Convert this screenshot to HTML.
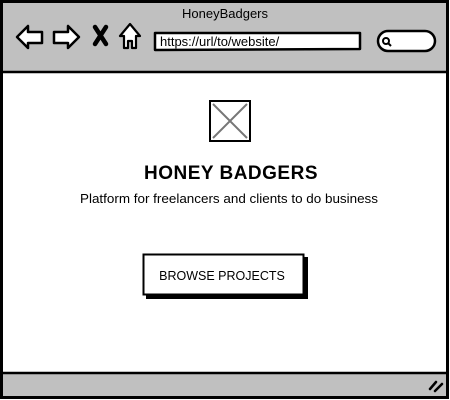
<!DOCTYPE html>
<html><head><style>
html,body{margin:0;padding:0;background:#fff;width:450px;height:400px;overflow:hidden}
svg{display:block}
text{font-family:"Liberation Sans",sans-serif}
</style></head><body>
<svg width="450" height="400" viewBox="0 0 450 400">
<rect x="1.5" y="1.5" width="446" height="396" fill="#fff" stroke="#000" stroke-width="3"/>
<rect x="3" y="3" width="443" height="69" fill="#c0c0c0"/>
<line x1="2" y1="72" x2="447" y2="72" stroke="#000" stroke-width="2.5"/>
<rect x="3" y="373" width="443" height="23" fill="#c0c0c0"/>
<line x1="2" y1="373" x2="447" y2="373" stroke="#000" stroke-width="2.5"/>
<text x="225" y="18" font-size="13" text-anchor="middle" fill="#000">HoneyBadgers</text>
<path d="M17 37 L28 26 L28 32 L42 32 L42 43 L28 43 L28 48 Z" fill="#fff" stroke="#000" stroke-width="2.5" stroke-linejoin="round"/>
<path d="M79 37 L68 26 L68 32 L54 32 L54 43 L68 43 L68 48 Z" fill="#fff" stroke="#000" stroke-width="2.5" stroke-linejoin="round"/>
<path d="M95 27 L106 44 M106 27 L95 44" stroke="#000" stroke-width="4.5" stroke-linecap="round"/>
<path d="M130 24 L120 36 L124 36 L124 48 L128 48 L128 41 L132 41 L132 48 L136 48 L136 36 L140 36 Z" fill="#fff" stroke="#000" stroke-width="2.2" stroke-linejoin="round"/>
<path d="M155 33 L360 33 L360 49 L155 50 Z" fill="#fff" stroke="#000" stroke-width="2.5" stroke-linejoin="round"/>
<text x="160" y="46" font-size="13" fill="#000">https://url/to/website/</text>
<rect x="378" y="31" width="57" height="20" rx="10" fill="#fff" stroke="#000" stroke-width="2.5"/>
<circle cx="386" cy="41" r="3" fill="none" stroke="#000" stroke-width="2"/>
<line x1="388" y1="43" x2="391" y2="46" stroke="#000" stroke-width="2"/>
<rect x="210" y="101" width="40" height="40" fill="#fff" stroke="#000" stroke-width="2"/>
<path d="M213 104 L247 138 M247 104 L213 138" stroke="#777" stroke-width="2"/>
<text x="231" y="179" font-size="19" font-weight="bold" text-anchor="middle" fill="#000" letter-spacing="0.5">HONEY BADGERS</text>
<text x="229" y="203" font-size="13" text-anchor="middle" fill="#000" textLength="298" lengthAdjust="spacingAndGlyphs">Platform for freelancers and clients to do business</text>
<rect x="146" y="257" width="162" height="42" fill="#000"/>
<rect x="143.5" y="254.5" width="160" height="40" fill="#fff" stroke="#000" stroke-width="2"/>
<text x="222" y="280" font-size="12.5" text-anchor="middle" fill="#000">BROWSE PROJECTS</text>
<path d="M430 389 L436 382 M435 391 L442 384" stroke="#000" stroke-width="2.5" stroke-linecap="round"/>
</svg>
</body></html>
